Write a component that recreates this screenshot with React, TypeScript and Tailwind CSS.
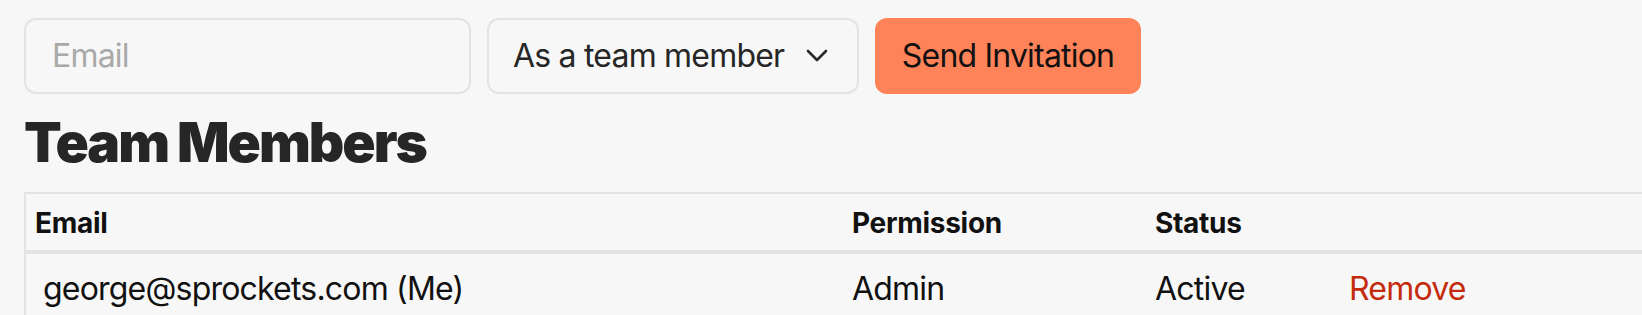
import React from "react";

export default function App() {
  return (
    <div
      className="w-[1642px] h-[315px] overflow-hidden bg-[#f7f7f7] pl-[24px] pt-[18px] text-[#111111]"
      style={{ fontFamily: "Inter, 'Noto Sans', sans-serif" }}
    >
      <div className="flex gap-[16px] tracking-[-0.8px]">
        <div className="w-[447px] h-[76px] box-border border-2 border-[#e3e3e3] rounded-[12px] pl-[26px] flex items-center text-[32px] text-[#a9a9a9]">
          Email
        </div>
        <div className="w-[372px] h-[76px] box-border border-2 border-[#e3e3e3] rounded-[12px] pl-[24px] pr-[29px] flex items-center justify-between text-[32px] text-[#262626]">
          <span>As a team member</span>
          <svg width="22" height="14" viewBox="0 0 22 14" fill="none">
            <path d="M2 2 L11 11 L20 2" stroke="#2a2a2a" strokeWidth="2.6" strokeLinecap="round" strokeLinejoin="round" />
          </svg>
        </div>
        <button className="w-[266px] h-[76px] rounded-[12px] bg-[#ff8359] flex items-center justify-center text-[32px] text-[#111111] tracking-[-0.8px]">
          Send Invitation
        </button>
      </div>
      <h1 className="mt-[21px] text-[55px] leading-none font-black text-[#262626] tracking-[-2px]">
        Team Members
      </h1>
      <div className="mt-[22px] border-t-2 border-l-2 border-[#e3e3e3]">
        <div className="grid grid-cols-[817px_303px_194px_1fr] h-[56px] border-b-4 border-[#e3e3e3] box-content text-[28px] font-bold leading-none tracking-[-0.3px]">
          <div className="pl-[9px] pt-[15px]">Email</div>
          <div className="pl-[9px] pt-[15px]">Permission</div>
          <div className="pl-[9px] pt-[15px]">Status</div>
          <div />
        </div>
        <div className="grid grid-cols-[817px_303px_194px_1fr] h-[80px] text-[32px] leading-none tracking-[-0.8px]">
          <div className="pl-[17px] pt-[19px]">george@sprockets.com (Me)</div>
          <div className="pl-[9px] pt-[19px]">Admin</div>
          <div className="pl-[9px] pt-[19px]">Active</div>
          <div className="pl-[9px] pt-[19px] text-[#c42b0c]">Remove</div>
        </div>
      </div>
    </div>
  );
}
